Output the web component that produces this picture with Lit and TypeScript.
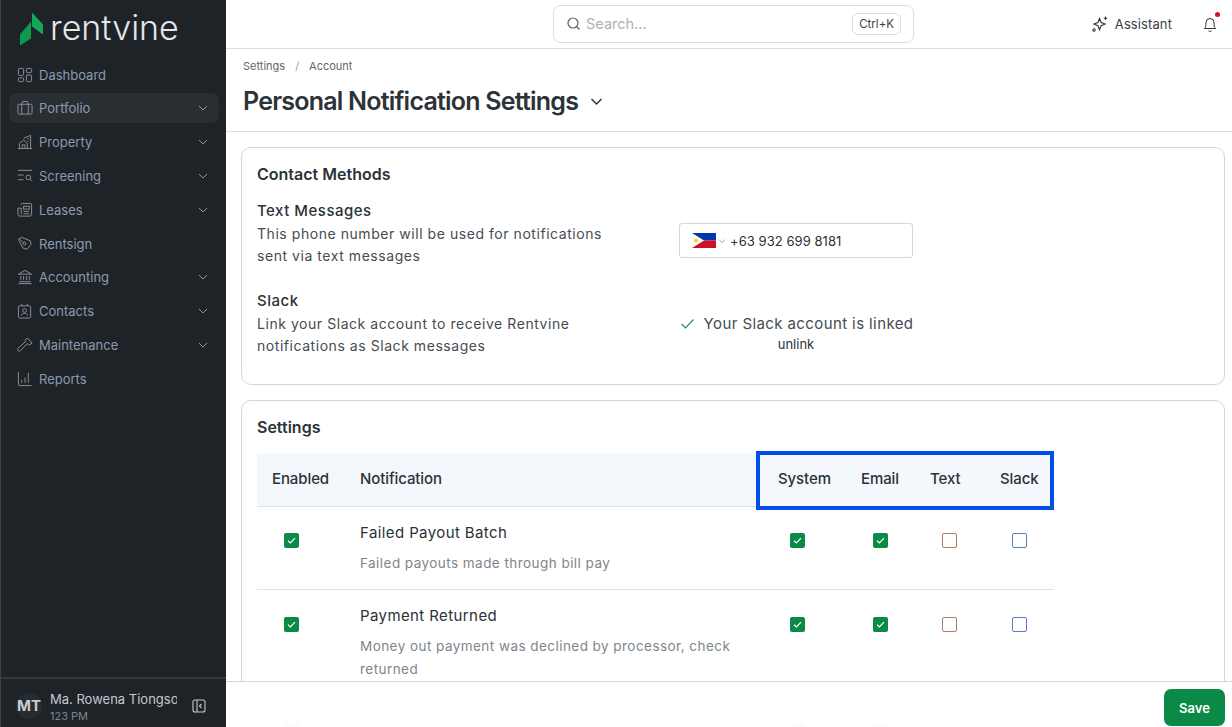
import { css, html, LitElement, svg } from "lit";
import { customElement } from "lit/decorators.js";

const icons: Record<string, unknown> = {
  dashboard: svg`<rect x="1.500" y="1.500" width="5.500" height="7.500" rx="1"/><rect x="10" y="1.500" width="5.500" height="4.500" rx="1"/><rect x="1.500" y="11.500" width="5.500" height="4" rx="1"/><rect x="10" y="8.500" width="5.500" height="7" rx="1"/>`,
  portfolio: svg`<rect x="1" y="4.500" width="15" height="10.500" rx="1.500"/><path d="M5.500 4.500V2.600a1 1 0 0 1 1-1h4a1 1 0 0 1 1 1v1.900M5 4.500V15M12 4.500V15"/>`,
  property: svg`<path d="M1 15.500h15M2.500 15.500V10L7 6.500l4 3.500v5.500M5.500 15.500v-4h3v4M7 4.500l7.500-3v14M11 7.500h1.500M11 5h1.500"/>`,
  screening: svg`<path d="M1 2.500h15M1 7.500h6M1 12.500h6"/><circle cx="12" cy="10" r="2.500"/><path d="M14 12l2 2"/>`,
  leases: svg`<path d="M4.500 3a1.500 1.500 0 0 1 1.500-1.500h8A1.500 1.500 0 0 1 15.500 3v10a2 2 0 0 1-2 2H3a2 2 0 0 1-2-2V6.500h3.500V13"/><rect x="7" y="4.500" width="6" height="3"/><path d="M7 10h6M7 12.500h6"/>`,
  rentsign: svg`<path d="M2 3l3-1.500 9 3.500 1 4-4.500 5-4-1L2 5z"/><circle cx="8" cy="8" r="1.500"/><path d="M2.500 3.500l4.500 3.500"/>`,
  accounting: svg`<path d="M1.500 5.500L8.500 1.500l7 4zM1.500 15.500h14M2.500 13.500h12M4 7.500v4M7 7.500v4M10 7.500v4M13 7.500v4"/>`,
  contacts: svg`<rect x="1.500" y="3" width="13" height="13" rx="1.500"/><path d="M5 1v2M11 1v2"/><circle cx="8" cy="8" r="2"/><path d="M4.500 13.500c.5-2 2-2.500 3.500-2.500s3 .5 3.500 2.500"/>`,
  maintenance: svg`<path d="M8.500 3.500L11 1l5 5.500-3 2-2-1.500-7.500 7.500a1.500 1.500 0 0 1-2.500-2.500L9 5z"/>`,
  reports: svg`<path d="M1.500 1.500v13a1 1 0 0 0 1 1h13M5 12.500v-3M8.500 12.500V7M12 12.500V2"/>`,
};

const nav = [
  { key: "dashboard", label: "Dashboard" },
  { key: "portfolio", label: "Portfolio", more: true, active: true },
  { key: "property", label: "Property", more: true },
  { key: "screening", label: "Screening", more: true },
  { key: "leases", label: "Leases", more: true },
  { key: "rentsign", label: "Rentsign" },
  { key: "accounting", label: "Accounting", more: true },
  { key: "contacts", label: "Contacts", more: true },
  { key: "maintenance", label: "Maintenance", more: true },
  { key: "reports", label: "Reports" },
];

const rows = [
  { name: "Failed Payout Batch", desc: "Failed payouts made through bill pay", on: [true, true, true, false, false] },
  { name: "Payment Returned", desc: "Money out payment was declined by processor, check returned", on: [true, true, true, false, false] },
  // next row is only a shadow under the footer, its text can't be read
  { name: "", desc: "", on: [true, true, true, false, false] },
];

const chevron = html`<svg class="chev" viewBox="0 0 12 12"><path d="M2 4l4 4 4-4"/></svg>`;

@customElement("app-root")
class AppRoot extends LitElement {
  static styles = css`
    :host {
      display: grid;
      grid-template-columns: 226px 1fr;
      height: 727px;
      overflow: hidden;
      font-family: Inter, "Liberation Sans", sans-serif;
      color: #2b3238;
      background: #fff;
    }
    .side {
      background: #1e2328;
      display: flex;
      flex-direction: column;
      height: 727px;
      border-left: 1px solid #3b4147;
      box-sizing: border-box;
    }
    .logo {
      display: flex;
      align-items: center;
      height: 59.6px;
      padding-left: 18px;
      gap: 6px;
      color: #e4e6e8;
      font-size: 34px;
      font-weight: 300;
    }
    .logo span {
      margin-top: -4px;
    }
    .logo svg {
      flex: none;
      width: 25px;
      height: 34px;
      margin-top: -2px;
    }
    nav {
      flex: 1;
      padding: 0 7px 0 8px;
    }
    .item {
      display: flex;
      align-items: center;
      height: 30px;
      margin-bottom: 3.8px;
      padding: 0 10px 0 8px;
      border-radius: 8px;
      color: #8a9bb0;
      font-size: 13px;
    }
    .item.active {
      background: #292e33;
    }
    .item .ico {
      width: 16px;
      height: 16px;
      margin-right: 6px;
      fill: none;
      stroke: #8d949b;
      stroke-width: 1;
    }
    .item .chev {
      margin-left: auto;
      width: 12px;
      height: 12px;
      fill: none;
      stroke: #8d949b;
      stroke-width: 1;
    }
    .user {
      display: flex;
      align-items: center;
      height: 50px;
      box-sizing: border-box;
      border-top: 2px solid #33393e;
      padding: 5px 15px 0;
      color: #c5c9cd;
    }
    .avatar {
      width: 26px;
      height: 26px;
      border-radius: 50%;
      background: #262d32;
      color: #c9ccd0;
      font-weight: 700;
      font-size: 15px;
      display: flex;
      align-items: center;
      justify-content: center;
      flex: none;
    }
    .who {
      width: 127px;
      margin: 3px 0 0 8px;
      overflow: hidden;
      white-space: nowrap;
      font-size: 13px;
      line-height: 17px;
    }
    .who small {
      display: block;
      font-size: 11px;
      line-height: 16px;
      color: #7d858c;
    }
    .collapse {
      width: 14px;
      height: 14px;
      margin-left: 15px;
      fill: none;
      stroke: #c5c9cd;
      stroke-width: 1.100;
    }
    .main {
      position: relative;
      display: flex;
      flex-direction: column;
      overflow: hidden;
      min-width: 0;
    }
    .top {
      display: flex;
      align-items: center;
      flex: none;
      height: 48px;
      border-bottom: 1px solid #dcdfe2;
      padding-right: 14px;
    }
    .search {
      display: flex;
      align-items: center;
      box-sizing: border-box;
      width: 361px;
      height: 38px;
      margin-left: 327px;
      padding: 0 13px 2px 12px;
      border: 1px solid #d9dcdf;
      border-radius: 8px;
      color: #a9b2b8;
      font-size: 14.5px;
    }
    .search svg {
      width: 15px;
      height: 15px;
      margin-right: 5px;
      fill: none;
      stroke: #5a6268;
      stroke-width: 1.200;
    }
    kbd {
      margin-left: auto;
      font: 11.5px Inter, sans-serif;
      color: #3a4147;
      border: 1px solid #d9dcdf;
      border-radius: 6px;
      padding: 3px 6px;
      margin: 2px -1px 0 auto;
    }
    .assistant {
      display: flex;
      align-items: center;
      margin-left: auto;
      gap: 7px;
      padding-bottom: 1px;
      font-size: 13px;
      letter-spacing: 0.1px;
      color: #3a4147;
    }
    .assistant svg {
      width: 16px;
      height: 16px;
      fill: none;
      stroke: #2b3238;
      stroke-width: 1.100;
    }
    .bell {
      position: relative;
      width: 16px;
      height: 18px;
      margin-left: 30px;
    }
    .bell svg {
      width: 16px;
      height: 18px;
      fill: none;
      stroke: #2b3238;
      stroke-width: 1;
    }
    .bell i {
      position: absolute;
      top: -3px;
      right: -2px;
      width: 5px;
      height: 5px;
      border-radius: 50%;
      background: #d0142c;
    }
    .head {
      flex: none;
      height: 83px;
      border-bottom: 1px solid #dcdfe2;
      padding: 10px 16px 0 17px;
      box-sizing: border-box;
    }
    .crumbs {
      display: flex;
      gap: 10px;
      font-size: 11px;
      line-height: 14px;
      color: #5f676d;
    }
    .crumbs span:nth-child(2) {
      color: #9aa1a6;
    }
    h1 {
      display: flex;
      align-items: center;
      gap: 11px;
      margin: 13px 0 0;
      font-size: 25px;
      line-height: 30px;
      font-weight: 600;
      letter-spacing: -0.78px;
      color: #2b3238;
    }
    h1 svg {
      width: 15px;
      height: 15px;
      fill: none;
      stroke: #2b3238;
      stroke-width: 1.500;
    }
    .body {
      flex: 1;
      overflow: hidden;
      padding: 15px 7px 0 15px;
      display: flex;
      flex-direction: column;
      gap: 15px;
    }
    .card {
      flex: none;
      border: 1px solid #d4d7da;
      border-radius: 10px;
      padding: 15px;
      background: #fff;
    }
    h2 {
      margin: 0;
      font-size: 16px;
      line-height: 22px;
      font-weight: 600;
      letter-spacing: 0;
      color: #2b3238;
    }
    .contact {
      height: 238px;
      box-sizing: border-box;
    }
    .method {
      display: grid;
      grid-template-columns: 422px 1fr;
      font-size: 14px;
      line-height: 22px;
      letter-spacing: 0.55px;
      color: #454c52;
    }
    .method + .method {
      margin-top: 23px;
    }
    .method b {
      display: block;
      margin-top: -1px;
      font-size: 15px;
      line-height: 24px;
      font-weight: 500;
      letter-spacing: 0.5px;
      color: #2b3238;
    }
    .contact h2 + .method {
      margin-top: 15px;
    }
    .phone {
      display: flex;
      align-items: center;
      box-sizing: border-box;
      width: 234px;
      height: 35px;
      margin-top: 23px;
      padding-left: 12px;
      border: 1px solid #d4d7da;
      border-radius: 3px;
      font-size: 13px;
      letter-spacing: 0.05px;
      color: #2b3238;
    }
    .phone .flag {
      width: 24px;
      height: 15px;
      margin-right: 2px;
    }
    .phone .chev {
      width: 8px;
      height: 8px;
      margin-right: 4px;
      fill: none;
      stroke: #a0a5a9;
    }
    .linked {
      width: 234px;
      margin-top: 23px;
      font-size: 15px;
      line-height: 22px;
      white-space: nowrap;
      letter-spacing: 0.4px;
    }
    .linked svg {
      width: 15px;
      height: 15px;
      margin: 0 4px 0 1px;
      vertical-align: -2px;
      fill: none;
      stroke: #1f8f6a;
      stroke-width: 1.200;
    }
    .linked a {
      display: block;
      margin-top: -1px;
      text-align: center;
      font-size: 13px;
      line-height: 20px;
      letter-spacing: 0;
      color: #2b3238;
    }
    .settings h2 {
      margin-bottom: 15px;
    }
    .tbl {
      position: relative;
      width: 797px;
    }
    .tr {
      display: grid;
      grid-template-columns: 88px 418px 83px 69px 70px 69px;
      border-bottom: 1px solid #dfe2e5;
    }
    .tr.th {
      height: 54px;
      box-sizing: border-box;
      align-items: center;
      padding-bottom: 2px;
      background: #f4f7fb;
      font-size: 15px;
      font-weight: 500;
      letter-spacing: -0.1px;
      color: #2b3238;
    }
    .tr.th span {
      padding-left: 15px;
    }
    .cell {
      padding: 15px 15px 14.9px;
      font-size: 15px;
      line-height: 22px;
      letter-spacing: 0.4px;
    }
    .cell p {
      margin: 7.5px 0 0;
      font-size: 13.5px;
      line-height: 23px;
      letter-spacing: 0.45px;
      color: #7e868c;
    }
    .boxcell {
      display: flex;
      padding-top: 26.4px;
      padding-left: 27px;
    }
    .box {
      box-sizing: border-box;
      width: 15px;
      height: 15px;
      border-radius: 2px;
      border: 1px solid #7a7f84;
      background: #fff;
    }
    .box.on {
      border: none;
      background: #0b8a47;
    }
    .box.on svg {
      display: block;
      width: 15px;
      height: 15px;
      fill: none;
      stroke: #fff;
      stroke-width: 1.200;
    }
    .box.txt {
      border-color: #b07a5c;
    }
    .box.slk {
      border-color: #5b7cc4;
    }
    .mark {
      position: absolute;
      top: -2px;
      left: 499px;
      width: 298px;
      height: 59px;
      box-sizing: border-box;
      border: 4px solid #0050e8;
      pointer-events: none;
    }
    .foot {
      position: absolute;
      left: 0;
      right: 0;
      bottom: 0;
      height: 46px;
      box-sizing: border-box;
      display: flex;
      justify-content: flex-end;
      padding: 7px 7px 0 0;
      border-top: 1px solid #d4d7da;
      background: rgba(255, 255, 255, 0.985);
    }
    button {
      width: 61px;
      height: 37px;
      border: none;
      border-radius: 7px;
      background: #0b8a47;
      color: #fff;
      font: 600 13px Inter, sans-serif;
    }
  `;

  renderBox(on: boolean, cls = "") {
    return html`<div class="box ${on ? "on" : cls}">
      ${on ? html`<svg viewBox="0 0 15 15"><path d="M4 7.800l2.400 2.200 4.600-4.800"/></svg>` : ""}
    </div>`;
  }

  render() {
    return html`
      <aside class="side">
        <div class="logo">
          <svg viewBox="0 0 25 34">
            <path fill="#12a85a" d="M13 0.500L24 12.500V22.500L13 14.500z"/>
            <path fill="#0c9a50" d="M12 9.500V26.500L1 33.500V22.500z"/>
          </svg>
          <span>rentvine</span>
        </div>
        <nav>
          ${nav.map(
            (n) => html`<div class="item ${n.active ? "active" : ""}">
              <svg class="ico" viewBox="0 0 17 17">${icons[n.key]}</svg>
              ${n.label}${n.more ? chevron : ""}
            </div>`
          )}
        </nav>
        <div class="user">
          <div class="avatar">MT</div>
          <div class="who">Ma. Rowena Tiongson<small>123 PM</small></div>
          <svg class="collapse" viewBox="0 0 14 14">
            <rect x="1" y="1" width="12" height="12" rx="2"/>
            <path d="M5 1v12M9.500 5L7.500 7l2 2"/>
          </svg>
        </div>
      </aside>
      <div class="main">
        <div class="top">
          <div class="search">
            <svg viewBox="0 0 15 15"><circle cx="7" cy="7" r="5"/><path d="M10.500 10.500L13.500 13.500"/></svg>
            Search...
            <kbd>Ctrl+K</kbd>
          </div>
          <div class="assistant">
            <svg viewBox="0 0 16 16">
              <path d="M7.500 2.500l1.600 4 4 1.600-4 1.600-1.600 4-1.600-4-4-1.600 4-1.600zM13.500 .5v3.500M11.800 2.200h3.400"/>
              <circle cx="2" cy="14" r="1.200"/>
            </svg>
            Assistant
          </div>
          <div class="bell">
            <svg viewBox="0 0 16 18">
              <path d="M2.500 13.500h11c-1.200-1.200-1.500-2.500-1.500-6a4 4 0 0 0-8 0c0 3.500-.3 4.800-1.500 6zM6.500 15.800c.6.800 2.400.8 3 0"/>
            </svg>
            <i></i>
          </div>
        </div>
        <div class="head">
          <div class="crumbs"><span>Settings</span><span>/</span><span>Account</span></div>
          <h1>
            Personal Notification Settings
            <svg viewBox="0 0 15 15"><path d="M2.500 5l5 5 5-5"/></svg>
          </h1>
        </div>
        <div class="body">
          <section class="card contact">
            <h2>Contact Methods</h2>
            <div class="method">
              <div>
                <b>Text Messages</b>
                This phone number will be used for notifications<br />sent via text messages
              </div>
              <div class="phone">
                <svg class="flag" viewBox="0 0 24 15">
                  <rect width="24" height="7.500" fill="#0038a8"/>
                  <rect y="7.500" width="24" height="7.500" fill="#ce1126"/>
                  <path d="M0 0l12 7.500L0 15z" fill="#fff"/>
                  <circle cx="4" cy="7.500" r="2" fill="#fcd116"/>
                </svg>
                <svg class="chev" viewBox="0 0 8 8"><path d="M1 2.500l3 3 3-3"/></svg>
                +63 932 699 8181
              </div>
            </div>
            <div class="method">
              <div>
                <b>Slack</b>
                Link your Slack account to receive Rentvine<br />notifications as Slack messages
              </div>
              <div class="linked">
                <svg viewBox="0 0 15 15"><path d="M1.500 8l4 4 8-8.500"/></svg>
                Your Slack account is linked
                <a>unlink</a>
              </div>
            </div>
          </section>
          <section class="card settings">
            <h2>Settings</h2>
            <div class="tbl">
              <div class="tr th">
                <span>Enabled</span><span>Notification</span><span>System</span><span>Email</span><span>Text</span><span>Slack</span>
              </div>
              ${rows.map(
                (r) => html`<div class="tr">
                  <div class="boxcell">${this.renderBox(r.on[0])}</div>
                  <div class="cell">${r.name}${r.desc ? html`<p>${r.desc}</p>` : ""}</div>
                  <div class="boxcell">${this.renderBox(r.on[1])}</div>
                  <div class="boxcell">${this.renderBox(r.on[2])}</div>
                  <div class="boxcell">${this.renderBox(r.on[3], "txt")}</div>
                  <div class="boxcell">${this.renderBox(r.on[4], "slk")}</div>
                </div>`
              )}
              <div class="mark"></div>
            </div>
          </section>
        </div>
        <div class="foot"><button>Save</button></div>
      </div>
    `;
  }
}
